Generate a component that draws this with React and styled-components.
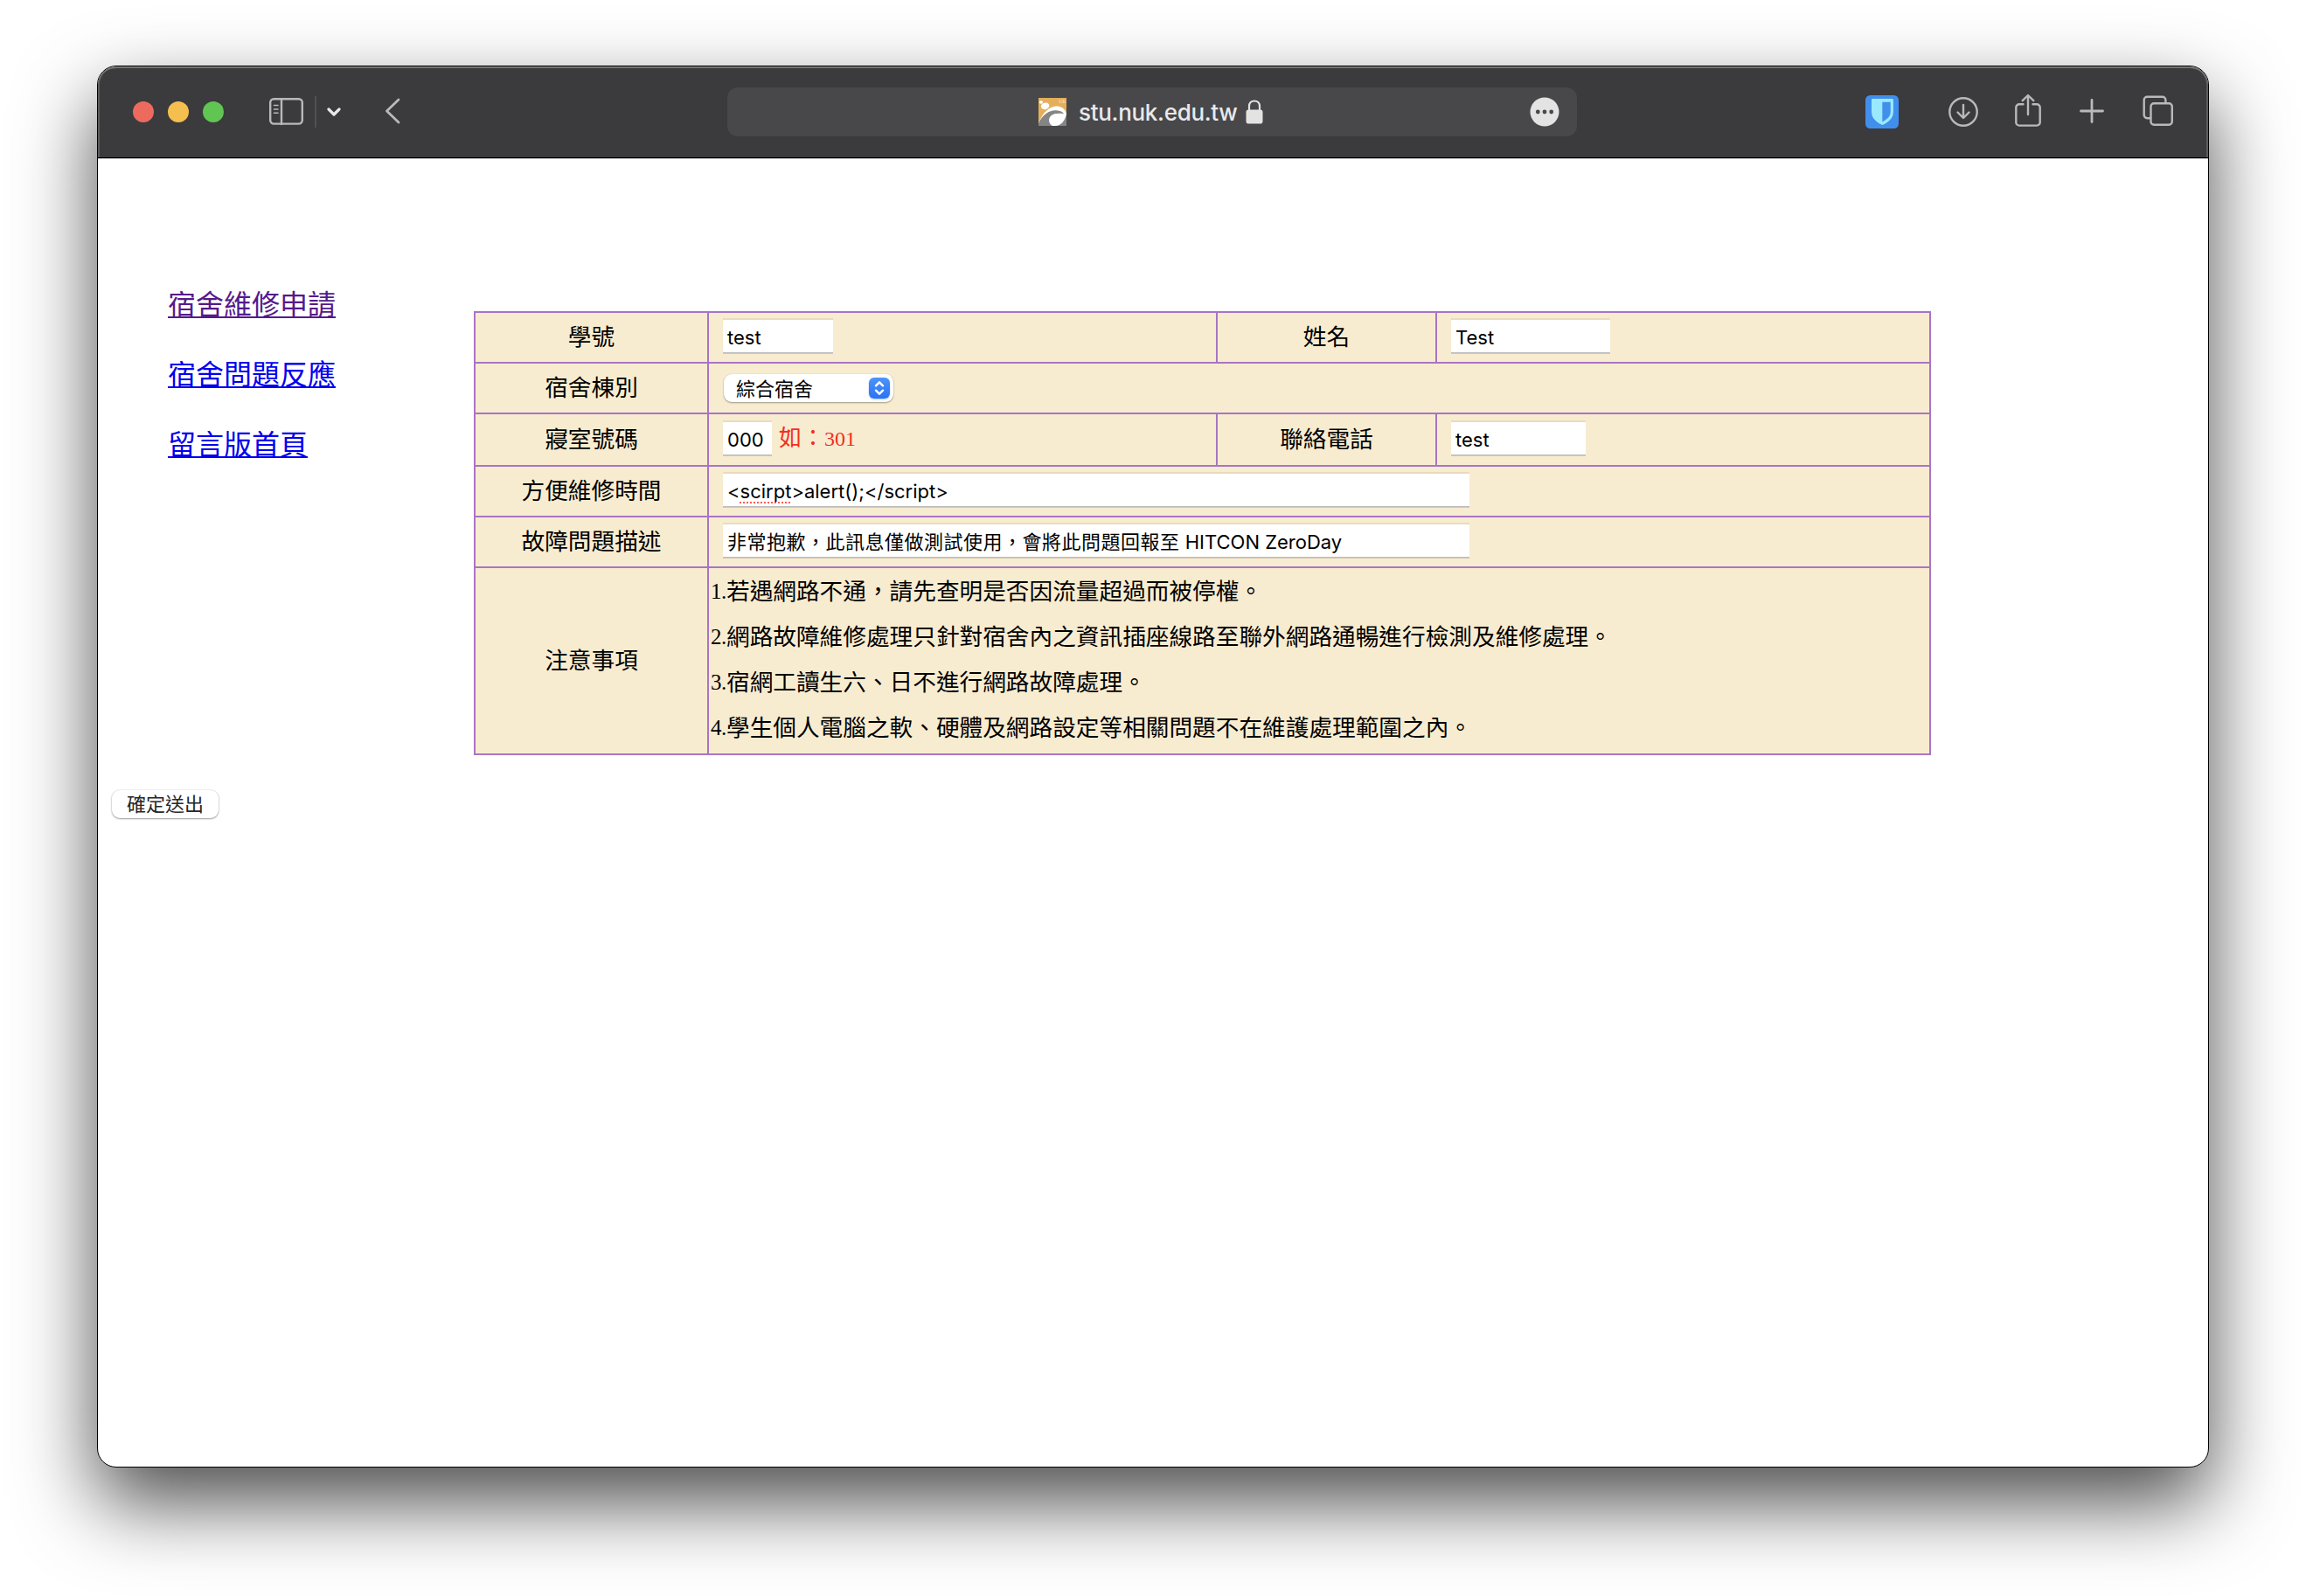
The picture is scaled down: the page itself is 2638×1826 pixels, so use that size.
import React from "react";
import styled, { createGlobalStyle } from "styled-components";

const notes = [
  "若遇網路不通，請先查明是否因流量超過而被停權。",
  "網路故障維修處理只針對宿舍內之資訊插座線路至聯外網路通暢進行檢測及維修處理。",
  "宿網工讀生六、日不進行網路故障處理。",
  "學生個人電腦之軟、硬體及網路設定等相關問題不在維護處理範圍之內。",
];

function Toolbar() {
  return (
    <Bar>
      <Lights>
        <Light color="#ed6a5e" />
        <Light color="#f5bf4f" />
        <Light color="#61c554" />
      </Lights>
      <SidebarIcon width="40" height="32" viewBox="0 0 40 32">
        <rect x="1.2" y="1.2" width="36.6" height="28.4" rx="4" />
        <path d="M14 1v29" />
        <path d="M5.5 8.5h4.5M5.5 13h4.5M5.5 17.3h4.5" strokeWidth="1.6" />
      </SidebarIcon>
      <Divider />
      <Chevron width="16" height="12" viewBox="0 0 16 12">
        <path d="M2 3l6 6 6-6" />
      </Chevron>
      <BackIcon width="18" height="30" viewBox="0 0 18 30">
        <path d="M16 2L2.5 15 16 28" />
      </BackIcon>

      <Address>
        <Favicon width="32" height="32" viewBox="0 0 32 32">
          <rect width="32" height="32" fill="#e4ae5b" />
          <path d="M0 29C5 16 13 9.500 21 9.500c6 0 10 4 11 9V32H0z" fill="#fff" />
          <path d="M0 32v-3C5 19 12 14 20 14.200c5 .2 8 2 9 4-7-1.500-13 .5-16 5.500-1.500 3-.5 6 3 8.300z" fill="#858585" />
          <path d="M32 19v13H19c7 0 11-6 13-13z" fill="#858585" />
          <ellipse cx="20" cy="24.600" rx="8" ry="6.500" fill="#fff" transform="rotate(-15 20 24.600)" />
          <ellipse cx="7.600" cy="9.300" rx="4.800" ry="3.800" fill="#fff" transform="rotate(-15 7.600 9.300)" />
          <ellipse cx="3" cy="5" rx="2.200" ry="1.700" fill="#fff" />
          <text x="23.500" y="6" fontSize="5.500" fontFamily="Liberation Serif" fill="#fbe9ca">
            UK
          </text>
        </Favicon>
        <Host>stu.nuk.edu.tw</Host>
        <svg width="20" height="28" viewBox="0 0 20 28">
          <rect x="0.5" y="11.5" width="19" height="16" rx="2.8" fill="#e3e3e4" />
          <path d="M4 13V7.6C4 3.8 6.5 1.5 10 1.5s6 2.3 6 6.1V13" fill="none" stroke="#e3e3e4" strokeWidth="2.2" />
        </svg>
        <More>
          <svg width="34" height="34" viewBox="0 0 34 34">
            <circle cx="17" cy="17" r="16.5" fill="#e3e3e4" />
            <circle cx="9.3" cy="17" r="2.4" fill="#48484a" />
            <circle cx="17" cy="17" r="2.4" fill="#48484a" />
            <circle cx="24.7" cy="17" r="2.4" fill="#48484a" />
          </svg>
        </More>
      </Address>

      <Shield width="38" height="38" viewBox="0 0 38 38">
        <rect width="38" height="38" rx="5.5" fill="#418fec" />
        <path d="M8.5 4h22a1.4 1.4 0 0 1 1.4 1.4V19c0 7-5 11.5-12.4 15C12 30.5 7 26 7 19V5.4A1.4 1.4 0 0 1 8.5 4z" fill="#9be9ff" />
        <path d="M19.3 7.7h9.4V19c0 5-3.6 8.300-9.4 11.5z" fill="#418fec" />
      </Shield>
      <DownloadIcon width="36" height="36" viewBox="0 0 36 36">
        <circle cx="18" cy="18" r="15.7" />
        <path d="M18 10v14.5M11.5 18.5L18 25l6.5-6.5" />
      </DownloadIcon>
      <ShareIcon width="32" height="38" viewBox="0 0 32 38">
        <path d="M10.5 12.2H6a3.7 3.7 0 0 0-3.7 3.7v17A3.7 3.7 0 0 0 6 36.6h20a3.7 3.7 0 0 0 3.7-3.7v-17a3.7 3.7 0 0 0-3.7-3.7h-4.5" />
        <path d="M16 24V2.3M9.7 8.2L16 2l6.3 6.2" />
      </ShareIcon>
      <PlusIcon width="28" height="28" viewBox="0 0 28 28">
        <path d="M14 1.5v25M1.5 14h25" strokeWidth="2.8" />
      </PlusIcon>
      <TabsIcon width="36" height="36" viewBox="0 0 36 36">
        <rect x="9.5" y="9.3" width="24.3" height="24.5" rx="3.6" />
        <path d="M9 26.2H5.3a3.6 3.6 0 0 1-3.6-3.6V5.3a3.6 3.6 0 0 1 3.6-3.6h17.5a3.6 3.6 0 0 1 3.6 3.6V9" />
      </TabsIcon>
    </Bar>
  );
}

function RepairForm() {
  return (
    <Table>
      <Label>學號</Label>
      <Cell>
        <Field $width={126}>test</Field>
      </Cell>
      <Label>姓名</Label>
      <Cell>
        <Field $width={182}>Test</Field>
      </Cell>

      <Label>宿舍棟別</Label>
      <Cell $wide>
        <Select>
          綜合宿舍
          <Stepper>
            <svg width="24" height="24" viewBox="0 0 24 24">
              <path d="M8 9.3l4-4 4 4M8 14.7l4 4 4-4" />
            </svg>
          </Stepper>
        </Select>
      </Cell>

      <Label>寢室號碼</Label>
      <Cell>
        <Field $width={56}>000</Field>
        <Hint>
          如：<span>301</span>
        </Hint>
      </Cell>
      <Label>聯絡電話</Label>
      <Cell>
        <Field $width={154}>test</Field>
      </Cell>

      <Label>方便維修時間</Label>
      <Cell $wide>
        <Field $width={854}>
          &lt;<Misspelled>scirpt</Misspelled>&gt;alert();&lt;/script&gt;
        </Field>
      </Cell>

      <Label>故障問題描述</Label>
      <Cell $wide>
        <Field $width={854}>
          <Cjk>非常抱歉，此訊息僅做測試使用，會將此問題回報至</Cjk> HITCON ZeroDay
        </Field>
      </Cell>

      <Label>注意事項</Label>
      <Notes>
        {notes.map((note, i) => (
          <li key={note}>
            <span>{i + 1}.</span>
            {note}
          </li>
        ))}
      </Notes>
    </Table>
  );
}

export default function App() {
  return (
    <>
      <GlobalStyle />
      <Desktop>
        <Window>
          <Toolbar />
          <Page>
            <Main>
              <Menu>
                <MenuLink href="#apply" $visited>
                  宿舍維修申請
                </MenuLink>
                <MenuLink href="#problem">宿舍問題反應</MenuLink>
                <MenuLink href="#board">留言版首頁</MenuLink>
              </Menu>
              <RepairForm />
            </Main>
            <Submit type="button">確定送出</Submit>
          </Page>
        </Window>
      </Desktop>
    </>
  );
}

const GlobalStyle = createGlobalStyle`
  * {
    box-sizing: border-box;
  }
  body {
    margin: 0;
    background: #fff;
    overflow: hidden;
  }
  svg {
    display: block;
    flex: none;
  }
`;

const Desktop = styled.div`
  width: 2638px;
  height: 1826px;
  padding: 75px 111px 147px;
`;

const Window = styled.div`
  height: 1604px;
  border: 1px solid #000;
  border-radius: 22px;
  background: #fff;
  overflow: hidden;
  box-shadow: 0 40px 90px rgba(0, 0, 0, 0.7);
`;

const Bar = styled.div`
  display: flex;
  align-items: center;
  height: 105px;
  background: #3b3b3d;
  border-bottom: 1px solid #000;
  border-radius: 21px 21px 0 0;
  box-shadow: inset 0 2px 0 #747474, inset 2px 0 0 #5c5c5d, inset -2px 0 0 #5c5c5d, 0 1px 0 #bdbdbd;
`;

const Lights = styled.div`
  display: flex;
  gap: 16px;
  margin-left: 40px;
`;

const Light = styled.span`
  width: 24px;
  height: 24px;
  border-radius: 50%;
  background: ${(props) => props.color};
`;

const LineIcon = styled.svg`
  fill: none;
  stroke: #b9b9bb;
  stroke-width: 2.4;
  stroke-linecap: round;
  stroke-linejoin: round;
`;

const SidebarIcon = styled(LineIcon)`
  margin: 0 0 1px 52px;
`;

const Divider = styled.div`
  width: 2px;
  height: 36px;
  margin-left: 12px;
  background: #505052;
`;

const Chevron = styled(LineIcon)`
  margin-left: 12px;
  stroke: #e8e8e9;
  stroke-width: 3.2;
`;

const BackIcon = styled(LineIcon)`
  margin: 0 0 2px 50px;
  stroke-width: 2.8;
`;

const Address = styled.div`
  display: flex;
  align-items: center;
  width: 972px;
  height: 56px;
  margin-left: 374px;
  padding: 0 20px 0 356px;
  border-radius: 12px;
  background: #48484a;
`;

const Favicon = styled.svg`
  margin-right: 14px;
`;

const Host = styled.span`
  width: 191px;
  padding-top: 2px;
  font: 450 26px/32px Inter, "Liberation Sans", sans-serif;
  letter-spacing: -0.3px;
  color: #e9e9ea;
`;

const More = styled.div`
  margin-left: auto;
`;

const Shield = styled.svg`
  margin-left: 330px;
`;

const DownloadIcon = styled(LineIcon)`
  margin: 0 0 1px 56px;
`;

const ShareIcon = styled(LineIcon)`
  margin: 0 0 4px 40px;
`;

const PlusIcon = styled(LineIcon)`
  margin: 0 0 3px 43px;
`;

const TabsIcon = styled(LineIcon)`
  margin: 0 0 2px 44px;
`;

const Page = styled.div`
  height: 1497px;
  padding: 175px 16px 0;
  font-family: "Liberation Serif", "Noto Sans CJK TC", serif;
`;

const Main = styled.div`
  display: flex;
  align-items: flex-start;
`;

const Menu = styled.nav`
  display: flex;
  flex-direction: column;
  align-items: flex-start;
  width: 414px;
  margin-top: -30px;
  padding-left: 64px;
`;

const MenuLink = styled.a`
  font: 400 32px/40px "Noto Sans CJK TC", sans-serif;
  margin-bottom: 40px;
  color: ${(props) => (props.$visited ? "#551a8b" : "#0000ee")};
  text-decoration: underline;
  text-decoration-thickness: 2px;
  text-underline-offset: 2px;
  text-decoration-skip-ink: none;
`;

const Table = styled.div`
  display: grid;
  grid-template-columns: 265px 580px 249px 563px;
  grid-template-rows: 56px 56px 58px 56px 56px 212px;
  gap: 2px;
  padding: 2px;
  background: #a974c6;
`;

const Label = styled.div`
  display: flex;
  align-items: center;
  justify-content: center;
  background: #f8ecd0;
  font-size: 26.67px;
  line-height: 40px;
`;

const Cell = styled.div`
  display: flex;
  align-items: center;
  padding-left: 16px;
  grid-column: ${(props) => (props.$wide ? "span 3" : "auto")};
  background: #f8ecd0;
`;

const Field = styled.div`
  width: ${(props) => props.$width}px;
  height: 38px;
  margin-bottom: 2px;
  padding-left: 5px;
  background: #fff;
  box-shadow: 0 -2px 0 #e9dcbd, 0 1px 0 #d0c8b5, inset 0 -1px 0 #bdbdbd;
  font: 400 22px/40px Inter, "Noto Sans CJK TC", sans-serif;
  white-space: nowrap;
  color: #000;
`;

const Cjk = styled.span`
  letter-spacing: 0.5px;
`;

const Misspelled = styled.span`
  text-decoration: underline dotted #ff5a52 2px;
  text-underline-offset: 4px;
  text-decoration-skip-ink: none;
`;

const Hint = styled.span`
  margin: 0 0 2px 8px;
  font-size: 26px;
  line-height: 40px;
  color: #f52c1d;

  span {
    font-size: 24px;
  }
`;

const Select = styled.div`
  display: flex;
  align-items: center;
  justify-content: space-between;
  width: 194px;
  height: 32px;
  margin-left: 1px;
  padding: 0 4px 0 14px;
  border-radius: 9px;
  background: #fff;
  box-shadow: 0 1px 2px rgba(0, 0, 0, 0.35), 0 0 1px rgba(0, 0, 0, 0.2);
  font: 400 22px/28px "Noto Sans CJK TC", sans-serif;
  padding-bottom: 3px;
`;

const Stepper = styled.span`
  width: 24px;
  height: 24px;
  margin-top: 3px;
  border-radius: 6px;
  background: linear-gradient(#4d94f8, #2a72f5);
  box-shadow: 0 1px 2px rgba(42, 114, 245, 0.4);

  path {
    fill: none;
    stroke: #fff;
    stroke-width: 2.4;
    stroke-linecap: round;
    stroke-linejoin: round;
  }
`;

const Notes = styled.ul`
  grid-column: span 3;
  margin: 0;
  padding: 1px 2px;
  list-style: none;
  background: #f8ecd0;
  font-size: 26.67px;
  line-height: 52px;

  li {
    display: flex;
    height: 52px;
    white-space: nowrap;
  }
  span {
    width: 18px;
    font-size: 25px;
    line-height: 51px;
    letter-spacing: -0.6px;
  }
`;

const Submit = styled.button`
  display: block;
  width: 122px;
  height: 32px;
  margin-top: 40px;
  padding: 0 0 4px;
  border: 0;
  border-radius: 9px;
  background: #fff;
  box-shadow: 0 1px 2px rgba(0, 0, 0, 0.35), 0 0 2px rgba(0, 0, 0, 0.2);
  font: 400 22px/28px "Noto Sans CJK TC", sans-serif;
  color: #262626;
`;
